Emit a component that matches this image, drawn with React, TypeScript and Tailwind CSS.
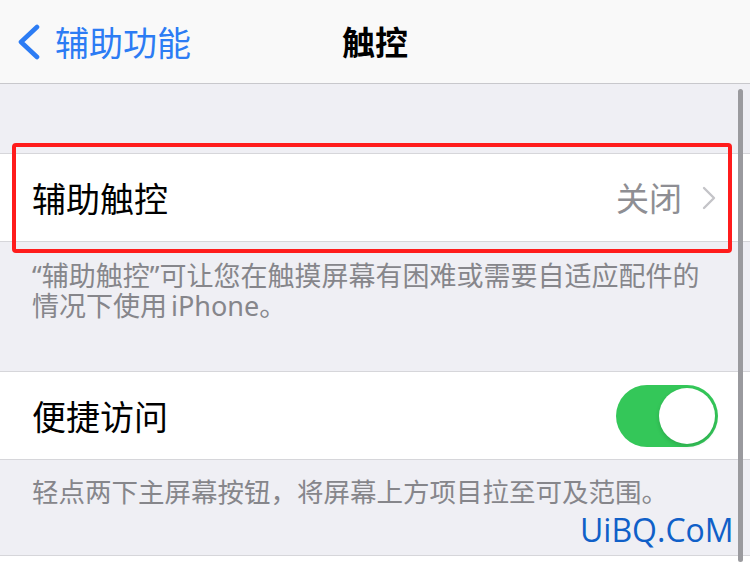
import React from 'react';

const FONT = '"Noto Sans CJK SC", "Noto Sans", sans-serif';
const NOTE_FONT = '"Noto Sans", "Noto Sans CJK SC", sans-serif';

const Chevron: React.FC<{ className?: string }> = ({ className }) => (
  <svg className={className} viewBox="0 0 14 24" fill="none" stroke="currentColor" strokeWidth="2.4" strokeLinecap="round" strokeLinejoin="round">
    <path d="M2 2l10 10L2 22" />
  </svg>
);

const App: React.FC = () => {
  return (
    <div className="relative w-[750px] h-[562px] overflow-hidden bg-[#efeff4]" style={{ fontFamily: FONT }}>
      {/* Nav bar */}
      <header className="h-[84px] bg-[#f9f9f9] border-b border-[#c8c8cc] grid grid-cols-[1fr_auto_1fr] items-center">
        <div className="flex items-center pl-[17px] text-[#2c7cf4]">
          <svg className="w-[24px] h-[36px]" viewBox="0 0 24 36" fill="none" stroke="currentColor" strokeWidth="4.6" strokeLinecap="round" strokeLinejoin="round">
            <path d="M20 3L4 18l16 15" />
          </svg>
          <span className="ml-[14px] text-[34px] leading-none">辅助功能</span>
        </div>
        <h1 className="text-[33px] font-bold leading-none text-black">触控</h1>
        <div />
      </header>

      <div className="h-[69px]" />

      {/* Row: AssistiveTouch */}
      <div className="h-[89px] bg-white border-y border-[#d6d6da] flex items-center pl-[32px] pr-[34px]">
        <span className="text-[34px] leading-none text-black">辅助触控</span>
        <span className="ml-auto text-[33px] leading-none text-[#8e8e93]">关闭</span>
        <Chevron className="ml-[20px] w-[14px] h-[24px] text-[#c4c4c8]" />
      </div>

      <div className="h-[129px] pt-[19px] pl-[32px] pr-[20px] text-[27px] leading-[30px] text-[#86868b]" style={{ fontFamily: NOTE_FONT }}>
        <p>“辅助触控”可让您在触摸屏幕有困难或需要自适应配件的</p>
        <p>情况下使用<span className="ml-[4px]">iPhone</span>。</p>
      </div>

      {/* Row: Reachability */}
      <div className="h-[89px] bg-white border-y border-[#d6d6da] flex items-center pl-[32px] pr-[32px]">
        <span className="text-[34px] leading-none text-black">便捷访问</span>
        <div className="ml-auto w-[102px] h-[62px] rounded-full bg-[#34c759] flex items-center justify-end pr-[3px]">
          <div className="w-[56px] h-[56px] rounded-full bg-white shadow-[0_2px_4px_rgba(0,0,0,0.15)]" />
        </div>
      </div>

      <div className="h-[95px] pt-[17px] pl-[32px] text-[26.5px] leading-[31px] text-[#86868b]" style={{ fontFamily: NOTE_FONT }}>
        <p>轻点两下主屏幕按钮，将屏幕上方项目拉至可及范围。</p>
      </div>

      <div className="h-[20px] bg-white border-t border-[#d6d6da]" />

      {/* Scroll indicator */}
      <div className="absolute top-[89px] bottom-0 right-[7px] w-[5px] rounded-full bg-[#9a9a9e]" />

      {/* Red highlight box */}
      <div className="absolute left-[12px] top-[143px] w-[720px] h-[110px] border-[4px] border-[#ff1c1c] rounded-[4px]" />

      {/* Watermark */}
      <div className="absolute left-[580px] top-[514px] text-[32px] leading-none text-[#1060c8]" style={{ fontFamily: '"Open Sans", sans-serif' }}>
        UiBQ.CoM
      </div>
    </div>
  );
};

export default App;
